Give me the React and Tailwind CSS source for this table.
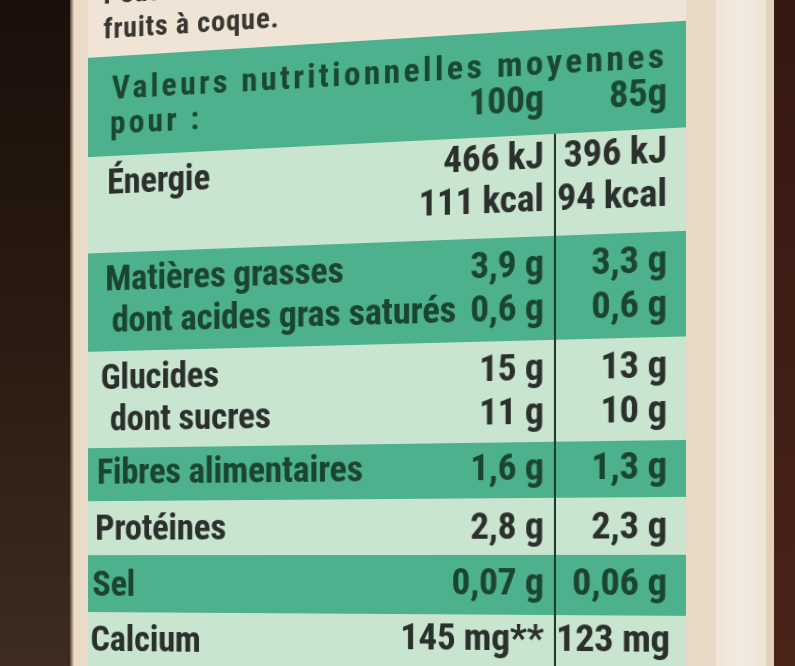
import React from "react";

const FONT = "font-['Roboto_Condensed','DejaVu_Sans_Condensed',sans-serif] font-bold";

function Lines({ items }) {
  return items.map((it, i) =>
    typeof it === "string" ? (
      <div key={i} className="whitespace-nowrap">{it}</div>
    ) : (
      <div key={i} className={`whitespace-nowrap ${it.cls}`}>{it.t}</div>
    )
  );
}

function Row({ rowCls, leftCls, rightCls, namesCls = "", names, v1, v2 }) {
  return (
    <div className={`flex shrink-0 ${rowCls}`}>
      <div className={`flex-1 flex justify-between pr-[10px] ${leftCls}`}>
        <div className={namesCls}>
          <Lines items={names} />
        </div>
        <div className="text-right">
          <Lines items={v1} />
        </div>
      </div>
      <div className="w-[2px] bg-[#1b3b2d]" />
      <div className={`w-[124px] pr-[18px] text-right ${rightCls}`}>
        <Lines items={v2} />
      </div>
    </div>
  );
}

const TEAL = "bg-[#4db18d] text-[#1b4433]";
const MINT = "bg-[#c9e5d0] text-[#2b302c]";

export default function App() {
  return (
    <div className={`w-[795px] h-[666px] overflow-hidden flex bg-[#eadbc8] ${FONT}`}>
      {/* dark background at the left */}
      <div className="w-[70px] shrink-0 bg-gradient-to-b from-[#1a0f0a] via-[#2a1b12] to-[#3d2c1f]" />
      <div className="w-[4px] shrink-0 bg-gradient-to-r from-[#5a4536] to-[#eadbc8]" />

      {/* the label, seen slightly in perspective */}
      <div className="w-[604px] shrink-0 self-start -mt-[40px] h-[780px] flex flex-col bg-[#efe4d6] origin-[318px_600px] [transform:perspective(1000px)_rotateY(-6.8deg)] tracking-[-0.3px]">
        <div className="h-[79px] shrink-0 flex flex-col justify-end pb-[12px] pl-[17px] text-[30px] leading-[34px] tracking-[0.8px] text-[#3a3632]">
          <div className="whitespace-nowrap mb-[2px]">Peut contenir des traces de</div>
          <div className="whitespace-nowrap">fruits à coque.</div>
        </div>

        {/* header */}
        <div className="h-[103px] shrink-0 bg-[#4db18d] text-[#1a4835] pt-[15px]">
          <div className="pl-[26px] text-[34px] leading-[34px] tracking-[3.3px] whitespace-nowrap">
            Valeurs nutritionnelles moyennes
          </div>
          <div className="flex leading-[38px]">
            <div className="flex-1 flex justify-between pl-[24px] pr-[10px]">
              <span className="text-[34px] tracking-[3.3px]">pour :</span>
              <span className="text-[37px]">100g</span>
            </div>
            <div className="w-[2px]" />
            <div className="w-[124px] pr-[18px] text-right text-[37px]">85g</div>
          </div>
        </div>

        <div className="flex flex-col text-[37px]">
          <Row
            rowCls={`h-[100px] ${MINT}`}
            leftCls="pl-[21px] leading-[42px]"
            rightCls="leading-[42px]"
            namesCls="pt-[6px]"
            names={["Énergie"]}
            v1={["466 kJ", "111 kcal"]}
            v2={["396 kJ", "94 kcal"]}
          />
          <Row
            rowCls={`h-[102px] ${TEAL}`}
            leftCls="pl-[19px] pt-[5px] leading-[43px]"
            rightCls="pt-[5px] leading-[43px]"
            names={["Matières grasses", { t: "dont acides gras saturés", cls: "pl-[7px]" }]}
            v1={["3,9 g", "0,6 g"]}
            v2={["3,3 g", "0,6 g"]}
          />
          <Row
            rowCls={`h-[100px] ${MINT}`}
            leftCls="pl-[14px] pt-[5px] leading-[43px]"
            rightCls="pt-[5px] leading-[43px]"
            names={["Glucides", { t: "dont sucres", cls: "pl-[10px]" }]}
            v1={["15 g", "11 g"]}
            v2={["13 g", "10 g"]}
          />
          <Row
            rowCls={`h-[55px] ${TEAL}`}
            leftCls="pl-[10px] pt-[5px] leading-[40px]"
            rightCls="pt-[5px] leading-[40px]"
            names={["Fibres alimentaires"]}
            v1={["1,6 g"]}
            v2={["1,3 g"]}
          />
          <Row
            rowCls={`h-[56px] ${MINT}`}
            leftCls="pl-[8px] pt-[8px] leading-[40px]"
            rightCls="pt-[8px] leading-[40px]"
            names={["Protéines"]}
            v1={["2,8 g"]}
            v2={["2,3 g"]}
          />
          <Row
            rowCls={`h-[59px] ${TEAL}`}
            leftCls="pl-[5px] pt-[7px] leading-[40px]"
            rightCls="pt-[7px] leading-[40px]"
            namesCls="pt-[3px]"
            names={["Sel"]}
            v1={["0,07 g"]}
            v2={["0,06 g"]}
          />
          <Row
            rowCls={`h-[110px] ${MINT}`}
            leftCls="pl-[3px] pt-[3px] leading-[40px]"
            rightCls="pt-[3px] leading-[40px]"
            namesCls="pt-[5px]"
            names={["Calcium"]}
            v1={["145 mg**"]}
            v2={["123 mg"]}
          />
        </div>
      </div>

      {/* cardboard at the right */}
      <div className="w-[96px] shrink-0 flex bg-[#e9dac7]">
        <div className="w-[38px]" />
        <div className="w-[50px] bg-gradient-to-r from-[#efe4d6] via-[#f4ece2] to-[#efe3d4]" />
        <div className="w-[8px] bg-[#e3d1bc]" />
      </div>
      <div className="flex-1 bg-gradient-to-b from-[#341811] to-[#4a2319]" />
    </div>
  );
}
